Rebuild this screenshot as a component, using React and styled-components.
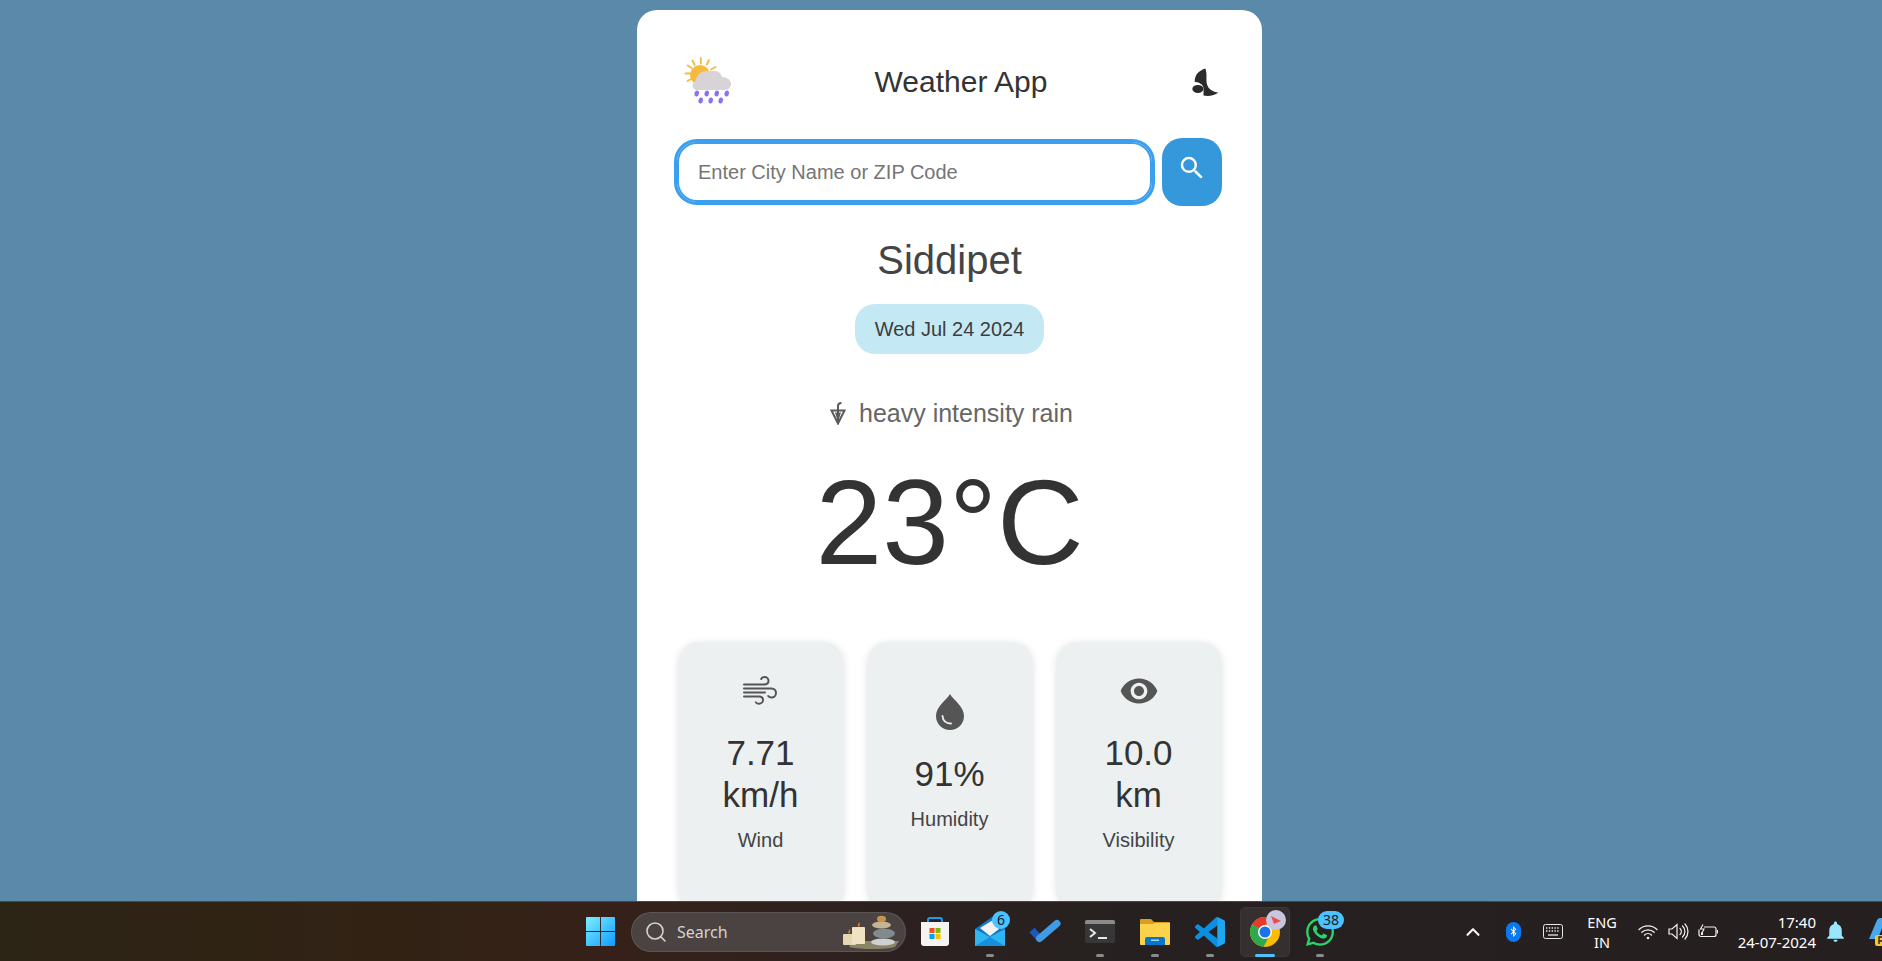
import React from 'react';
import styled, { createGlobalStyle } from 'styled-components';
import { MdSearch, MdVisibility, MdNotifications } from 'react-icons/md';
import { FaWhatsapp, FaBluetoothB } from 'react-icons/fa';
import { Search as SearchGlyph, ChevronUp } from 'lucide-react';

const GlobalStyle = createGlobalStyle`
  html, body, #root {
    margin: 0;
    height: 100%;
    overflow: hidden;
  }
  body {
    font-family: "Liberation Sans", Arial, sans-serif;
    color: #333;
  }
  * {
    box-sizing: border-box;
  }
`;

const Screen = styled.div`
  display: flex;
  flex-direction: column;
  height: 961px;
  overflow: hidden;
`;

const Stage = styled.main`
  flex: 1;
  min-height: 0;
  overflow: hidden;
  display: flex;
  justify-content: center;
  background: #5b89a9;
  padding: 10px 0 0 17px;
`;

const Card = styled.section`
  flex: none;
  width: 625px;
  height: 920px;
  padding: 46px 40px 0;
  background: #fff;
  border-radius: 20px;
  display: flex;
  flex-direction: column;
  align-items: stretch;
`;

const Header = styled.header`
  display: flex;
  align-items: center;
  justify-content: space-between;
  height: 48px;
  padding-left: 7px;
`;

const Title = styled.h1`
  margin: 3px 4px 0 0;
  font-size: 30px;
  font-weight: 400;
  color: #333;
`;

const SearchRow = styled.form`
  display: flex;
  align-items: center;
  gap: 10px;
  margin-top: 34px;
`;

const CityInput = styled.input`
  flex: 1;
  min-width: 0;
  height: 60px;
  padding: 0 19px;
  border: 2px solid #3a9fee;
  border-radius: 20px;
  outline: 3px solid #3a9fee;
  font: 400 20px "Liberation Sans", Arial, sans-serif;
  color: #333;
  background: #fff;

  &::placeholder {
    color: #757575;
    opacity: 1;
  }
`;

const SearchButton = styled.button`
  flex: none;
  width: 60px;
  height: 68px;
  padding: 0 0 8px;
  border: 0;
  border-radius: 20px;
  background: #3498db;
  color: #fff;
  display: flex;
  align-items: center;
  justify-content: center;
`;

const City = styled.h2`
  margin: 31px 0 0;
  text-align: center;
  font-size: 40px;
  line-height: 46px;
  font-weight: 400;
  color: #444;
`;

const DatePill = styled.div`
  align-self: center;
  margin-top: 21px;
  height: 50px;
  padding: 0 20px;
  border-radius: 20px;
  background: #c4e9f4;
  color: #3d3d3d;
  font-size: 20px;
  line-height: 50px;
`;

const Description = styled.div`
  margin-top: 45px;
  display: flex;
  align-items: center;
  justify-content: center;
  gap: 13px;
  height: 28px;
  padding-left: 4px;
  font-size: 25px;
  color: #666;
`;

const Temperature = styled.div`
  margin-top: 23px;
  text-align: center;
  font-size: 120px;
  line-height: 144px;
  color: #333;
`;

const Stats = styled.div`
  display: grid;
  grid-template-columns: repeat(3, 164px);
  justify-content: center;
  gap: 25px;
  margin-top: 48px;
`;

const StatCard = styled.article`
  height: 266px;
  padding: 0 10px 28px;
  border-radius: 20px;
  background: #ecf0f1;
  box-shadow: 0 2px 8px rgba(0, 0, 0, 0.14);
  display: flex;
  flex-direction: column;
  align-items: center;
  justify-content: center;
  text-align: center;
`;

const StatIcon = styled.div`
  height: 40px;
  display: flex;
  align-items: center;
  justify-content: center;
  color: #555;
`;

const StatValue = styled.div`
  margin-top: 21px;
  font-size: 35px;
  line-height: 42px;
  color: #333;
`;

const StatLabel = styled.div`
  margin-top: 13px;
  font-size: 20px;
  line-height: 23px;
  color: #444;
`;

const Taskbar = styled.footer`
  flex: none;
  height: 60px;
  display: flex;
  align-items: center;
  padding-left: 575px;
  border-top: 1px solid #47494a;
  background: linear-gradient(90deg, #2c2414 0%, #332215 25%, #362119 32%, #2e2120 45%, #262120 60%, #25201f 100%);
  overflow: hidden;
  color: #fff;
  font-family: "Noto Sans", "Open Sans", sans-serif;
`;

const TaskSlot = styled.div`
  position: relative;
  flex: none;
  width: 50px;
  height: 50px;
  margin-right: ${({ $gap }) => $gap ?? 5}px;
  border-radius: 5px;
  display: flex;
  align-items: center;
  justify-content: center;
  background: ${({ $active }) => ($active ? 'rgba(255, 255, 255, 0.07)' : 'transparent')};
  box-shadow: ${({ $active }) => ($active ? 'inset 0 0 0 1px rgba(255, 255, 255, 0.04)' : 'none')};
`;

const RunDot = styled.span`
  position: absolute;
  bottom: 0;
  left: 50%;
  transform: translateX(-50%);
  width: ${({ $active }) => ($active ? 20 : 8)}px;
  height: 3px;
  border-radius: 2px;
  background: ${({ $active }) => ($active ? '#4cc2ff' : '#8b8b8b')};
`;

const CountBadge = styled.span`
  position: absolute;
  top: 4px;
  right: ${({ $right }) => $right}px;
  min-width: ${({ $wide }) => ($wide ? 26 : 18)}px;
  height: 18px;
  border-radius: 9px;
  background: #4cc2ff;
  color: #1a1a1a;
  font-size: 14px;
  line-height: 18px;
  text-align: center;
`;

const SearchPill = styled.div`
  flex: none;
  display: flex;
  align-items: center;
  width: 275px;
  height: 40px;
  margin-right: 4px;
  padding: 0 6px 0 12px;
  border-radius: 20px;
  border: 1px solid rgba(255, 255, 255, 0.1);
  background: #4a4341;
  color: #d5d2d0;
  font-size: 16px;
`;

const SearchText = styled.span`
  margin-left: 9px;
  flex: 1;
`;

const Tray = styled.div`
  flex: none;
  display: flex;
  align-items: center;
  margin-left: auto;
  height: 100%;
`;

const TrayItem = styled.div`
  flex: none;
  width: ${({ $width }) => $width}px;
  margin-left: ${({ $offset }) => $offset || 0}px;
  display: flex;
  align-items: center;
  justify-content: ${({ $start }) => ($start ? 'flex-start' : 'center')};
  overflow: hidden;
`;

const BluetoothPill = styled.span`
  width: 15px;
  height: 20px;
  border-radius: 8px;
  background: #0a78f0;
  color: #fff;
  display: flex;
  align-items: center;
  justify-content: center;
`;

const Lang = styled.div`
  margin-right: 2px;
  font-size: 14.5px;
  line-height: 20px;
  text-align: center;
`;

const Clock = styled.div`
  width: 93px;
  text-align: right;
  font-size: 15px;
  line-height: 20px;
  white-space: nowrap;
`;

const ChromeBadge = styled.span`
  position: absolute;
  top: 3px;
  right: 4px;
  width: 20px;
  height: 20px;
  border-radius: 50%;
  background: #c9c5dc;
  display: flex;
  align-items: center;
  justify-content: center;
`;

const MoonSvg = styled.svg`
  margin-top: 3px;
`;

const FixedSvg = styled.svg`
  flex: none;
`;

const WeatherIcon = () => (
  <svg width="50" height="50" viewBox="0 0 50 50">
    <circle cx="16" cy="20" r="10" fill="#f6bb3c" />
    <g stroke="#f6bb3c" strokeWidth="1.8" strokeLinecap="round">
      <path d="M16.8 3v5.5M8.5 5.5l2.2 4.5M25 5l-2.2 4.5M1.5 18.5h5M3.5 26l4.2-2.2M3.5 10.5l4.2 2.5M31.5 12l-4.5 2.5" />
    </g>
    <path d="M13 35c-2.500 0-4.500-2-4.500-4.500 0-2 1-3.500 3-4 .5-5 4-9.500 10-10.500h9c4 0 6.500 2.500 7.500 6 5 0 9 3 9 7 0 3-2.500 6-6 6z" fill="#d7d3d6" />
    <g fill="#8872f6">
      {[[12.7, 38.5], [22.7, 38.5], [32.7, 38.5], [42.7, 38.5], [16.7, 45.5], [26.7, 45.5], [36.7, 45.5]].map(([x, y]) => (
        <ellipse key={`${x}-${y}`} cx={x} cy={y} rx="2.2" ry="3" transform={`rotate(12 ${x} ${y})`} />
      ))}
    </g>
  </svg>
);

const MoonIcon = () => (
  <MoonSvg width="30" height="30" viewBox="1 1 27 27" fill="#2b2b2b">
    <path d="M13 2.300C7.500 4 3 8 3.500 14.500c2.500.2 6 1 7.500 4 .8 2 .3 5 .3 8.200 5 .8 10 0 13.400-2.700-5.500-.5-10.700-3.500-10.700-11 0-4 .3-7.500-1-10.700z" />
    <ellipse cx="6.300" cy="20.700" rx="5" ry="3.600" />
  </MoonSvg>
);

const UmbrellaIcon = () => (
  <svg width="16" height="24" viewBox="0 0 16 24" fill="none" stroke="#5a5a5a" strokeWidth="2">
    <path d="M1.500 9.500L8 22.500l6.500-13z" />
    <path d="M8 22V5c0-2 1-3 3.500-3" />
    <path d="M5 11.500L8 21l3-9.500z" fill="#5a5a5a" stroke="none" />
  </svg>
);

const WindIcon = () => (
  <svg width="35" height="29" viewBox="0 0 35 29" fill="none" stroke="#555" strokeWidth="2" strokeLinecap="round">
    <path d="M1 8.500h20c2.800 0 4.500-1.600 4.500-3.700S23.800 1 21.500 1c-1.600 0-2.800.8-3.300 2" />
    <path d="M1 12.500h27.500c2.700 0 4.500 2 4.500 4.500s-2 4.500-4.500 4.500c-1.400 0-2.600-.5-3.300-1.500" />
    <path d="M1 16.500h21" />
    <path d="M1 20.500h15c2.400 0 4 1.500 4 3.500s-1.700 3.800-4 3.800c-1.400 0-2.500-.6-3.200-1.600" />
  </svg>
);

const DropIcon = () => (
  <svg width="28" height="36" viewBox="0 0 28 36">
    <path d="M14 0C11 5.500 0 12.500 0 22a14 14 0 0 0 28 0C28 12.500 17 5.500 14 0z" fill="#555" />
    <path d="M6.500 22c.3 4.800 3.800 7.800 8.500 7.500" fill="none" stroke="#ecf0f1" strokeWidth="1.800" strokeLinecap="round" />
  </svg>
);

const WindowsIcon = () => (
  <svg width="29" height="29" viewBox="0 0 31 31">
    <defs>
      <linearGradient id="winBlue" x1="0" y1="0" x2="1" y2="1">
        <stop offset="0" stopColor="#7bf0ff" />
        <stop offset="1" stopColor="#0f9bff" />
      </linearGradient>
    </defs>
    <path d="M1 0h14v15H0V1a1 1 0 0 1 1-1zM16 0h14a1 1 0 0 1 1 1v14H16zM0 16h15v15H1a1 1 0 0 1-1-1zM16 16h15v14a1 1 0 0 1-1 1H16z" fill="url(#winBlue)" />
  </svg>
);

const StoreIcon = () => (
  <svg width="30" height="30" viewBox="0 0 30 30">
    <path d="M8 6V3a2 2 0 0 1 2-2h10a2 2 0 0 1 2 2v3" fill="none" stroke="#1d9ae8" strokeWidth="2" />
    <path d="M1 5h28v21a3 3 0 0 1-3 3H4a3 3 0 0 1-3-3z" fill="#f6f4f2" />
    <rect x="9.500" y="11" width="5" height="5" fill="#f25022" />
    <rect x="15.500" y="11" width="5" height="5" fill="#7fba00" />
    <rect x="9.500" y="17" width="5" height="5" fill="#00a4ef" />
    <rect x="15.500" y="17" width="5" height="5" fill="#ffb900" />
  </svg>
);

const MailIcon = () => (
  <svg width="30" height="29" viewBox="0 0 30 29">
    <path d="M0 12L17 0l13 12v17H0z" fill="#1079c9" />
    <path d="M5 11l13-8 6 9-9 7z" fill="#f2f2f2" />
    <path d="M0 12l15 8 15-8v17H0z" fill="#2fb6f0" />
    <path d="M0 29l15-9 15 9z" fill="#1490df" />
  </svg>
);

const TodoIcon = () => (
  <svg width="32" height="26" viewBox="0 0 32 26" fill="none" strokeWidth="7">
    <path d="M3 11l9 10" stroke="#1e58b8" />
    <path d="M10.500 19.500L28 4.500" stroke="#3f9be4" strokeLinecap="round" />
  </svg>
);

const TerminalIcon = () => (
  <svg width="30" height="23" viewBox="0 0 30 23">
    <rect width="30" height="23" rx="2" fill="#373737" />
    <path d="M2 0h26a2 2 0 0 1 2 2v2H0V2a2 2 0 0 1 2-2z" fill="#8c8c8c" />
    <path d="M5 9l5 4-5 4" fill="none" stroke="#e8e8e8" strokeWidth="2" />
    <path d="M13 18h9" stroke="#e8e8e8" strokeWidth="2" />
  </svg>
);

const FolderIcon = () => (
  <svg width="30" height="26" viewBox="0 0 30 26">
    <path d="M1 0h10l3 3h15a1 1 0 0 1 1 1v6H0V1a1 1 0 0 1 1-1z" fill="#d99f1c" />
    <path d="M0 5h13l2-1h15v21a1 1 0 0 1-1 1H1a1 1 0 0 1-1-1z" fill="#fbd24c" />
    <path d="M5 20a2 2 0 0 1 2-2h16a2 2 0 0 1 2 2v6H5z" fill="#0a74c8" />
    <rect x="11" y="20.500" width="8" height="1.500" fill="#9fd5f5" />
  </svg>
);

const CodeIcon = () => (
  <svg width="30" height="30" viewBox="0 0 24 24">
    <path d="M23.150 2.587L18.210.210a1.494 1.494 0 0 0-1.705.290l-9.460 8.630-4.120-3.128a.999.999 0 0 0-1.276.057L.327 7.261A1 1 0 0 0 .326 8.740L3.899 12 .326 15.260a1 1 0 0 0 .001 1.479L1.650 17.940a.999.999 0 0 0 1.276.057l4.120-3.128 9.460 8.630a1.492 1.492 0 0 0 1.704.290l4.942-2.377A1.500 1.500 0 0 0 24 20.060V3.939a1.500 1.500 0 0 0-.850-1.352zm-5.146 14.861L10.826 12l7.178-5.448v10.896z" fill="#0c8fe0" />
    <path d="M18 .4c.1 0 .2 0 .2-.2l4.950 2.390A1.500 1.500 0 0 1 24 3.940v16.120a1.500 1.500 0 0 1-.850 1.350l-4.940 2.380c-.1 0-.2.1-.2 0z" fill="#1fa6f0" />
  </svg>
);

const ChromeIcon = () => (
  <svg width="30" height="30" viewBox="0 0 30 30">
    <circle cx="15" cy="15" r="15" fill="#fbbc04" />
    <path d="M15 15L2 7.500A15 15 0 0 1 28 7.500H15z" fill="#e33b2e" />
    <path d="M15 15L2 7.500A15 15 0 0 0 13.500 29.900L21.500 15z" fill="#2da94f" />
    <circle cx="15" cy="15" r="7" fill="#fff" />
    <circle cx="15" cy="15" r="5.500" fill="#1a73e8" />
  </svg>
);

const StonesArt = () => (
  <FixedSvg width="56" height="34" viewBox="0 0 56 34">
    <path d="M6 32l4-6h46l-4 6q-8 2-22 2t-24-2z" fill="#8a8565" />
    <rect x="0" y="19" width="13" height="11" rx="1" fill="#e6d8b4" />
    <rect x="9" y="12" width="13" height="17" rx="1" fill="#f0e3c4" />
    <path d="M6 19c-1.500-2 0-3 .5-5 .8 2 1.500 3-.5 5zM15.500 12c-1.500-2 0-3 .5-5 .8 2 1.500 3-.5 5z" fill="#e0822c" />
    <ellipse cx="40" cy="27" rx="12" ry="3.600" fill="#cfd0d2" />
    <ellipse cx="41" cy="18.500" rx="11" ry="4.800" fill="#7f8b8d" />
    <ellipse cx="38.500" cy="10" rx="9.500" ry="3.500" fill="#c5b493" />
    <ellipse cx="38.500" cy="4" rx="4.500" ry="3.200" fill="#c69450" />
  </FixedSvg>
);

const KeyboardIcon = () => (
  <svg width="20" height="15" viewBox="0 0 20 15" fill="none" stroke="#e8e8e8" strokeWidth="1">
    <rect x="0.500" y="0.500" width="19" height="14" rx="2" />
    <path d="M3 4h14M3 7h14" strokeDasharray="1.400 1.400" strokeWidth="1.300" />
    <path d="M5 11h10" strokeWidth="1.300" />
  </svg>
);

const WifiIcon = () => (
  <svg width="20" height="16" viewBox="0 0 20 16" fill="none" stroke="#f2f2f2" strokeWidth="1.300" strokeLinecap="round">
    <path d="M1 5.500a13 13 0 0 1 18 0M3.800 8.300a9 9 0 0 1 12.400 0M6.500 11a5 5 0 0 1 7 0" />
    <circle cx="10" cy="14" r="1.300" fill="#f2f2f2" stroke="none" />
  </svg>
);

const VolumeIcon = () => (
  <svg width="21" height="17" viewBox="0 0 21 17" fill="none" stroke="#f2f2f2" strokeWidth="1.200">
    <path d="M1 6h3l5-4.500v14L4 11H1z" />
    <path d="M12 5.500a4 4 0 0 1 0 6M14.500 3a7.500 7.500 0 0 1 0 11M17 1a11 11 0 0 1 0 15" strokeLinecap="round" />
  </svg>
);

const BatteryIcon = () => (
  <svg width="20" height="15" viewBox="0 0 20 15" fill="none" stroke="#f2f2f2" strokeWidth="1.200">
    <path d="M6 3h10a2 2 0 0 1 2 2v5.500a2 2 0 0 1-2 2H3a2 2 0 0 1-2-2V5.500" />
    <path d="M19.500 6v3.500" />
    <path d="M5 .5L2.500 5h3.500L3.500 10" strokeWidth="1.100" />
    <rect x="3" y="8.500" width="2" height="2.500" fill="#f2f2f2" stroke="none" />
  </svg>
);

const CopilotIcon = () => (
  <FixedSvg width="30" height="30" viewBox="0 0 30 30">
    <path d="M3 22L11 3q1-2 3-2h8q-3 2-4 5l-5 13q-1 3-4 3z" fill="#4aa7ee" />
    <path d="M21 2h5q3 0 2 3l-5 13q-1 3-4 3h-6q3-1 4-4z" fill="#5cc98a" />
    <rect x="9" y="18" width="13" height="11" rx="2" fill="#fdc32d" />
    <path d="M13 27v-7h2.500a2 2 0 0 1 0 4H13" fill="none" stroke="#1f1f1f" strokeWidth="1.300" />
  </FixedSvg>
);

const stats = [
  { key: 'wind', icon: <WindIcon />, value: <>7.71<br />km/h</>, label: 'Wind' },
  { key: 'humidity', icon: <DropIcon />, value: '91%', label: 'Humidity' },
  { key: 'visibility', icon: <MdVisibility size={40} />, value: <>10.0<br />km</>, label: 'Visibility' },
];

export default function App() {
  return (
    <Screen>
      <GlobalStyle />
      <Stage>
        <Card>
          <Header>
            <WeatherIcon />
            <Title>Weather App</Title>
            <MoonIcon />
          </Header>
          <SearchRow onSubmit={(e) => e.preventDefault()}>
            <CityInput placeholder="Enter City Name or ZIP Code" />
            <SearchButton aria-label="Search">
              <MdSearch size={30} />
            </SearchButton>
          </SearchRow>
          <City>Siddipet</City>
          <DatePill>Wed Jul 24 2024</DatePill>
          <Description>
            <UmbrellaIcon />
            heavy intensity rain
          </Description>
          <Temperature>23°C</Temperature>
          <Stats>
            {stats.map((stat) => (
              <StatCard key={stat.key}>
                <StatIcon>{stat.icon}</StatIcon>
                <StatValue>{stat.value}</StatValue>
                <StatLabel>{stat.label}</StatLabel>
              </StatCard>
            ))}
          </Stats>
        </Card>
      </Stage>
      <Taskbar>
        <TaskSlot $gap={6}><WindowsIcon /></TaskSlot>
        <SearchPill>
          <SearchGlyph size={24} strokeWidth={1.6} />
          <SearchText>Search</SearchText>
          <StonesArt />
        </SearchPill>
        <TaskSlot><StoreIcon /></TaskSlot>
        <TaskSlot>
          <MailIcon />
          <CountBadge $right={5}>6</CountBadge>
          <RunDot />
        </TaskSlot>
        <TaskSlot><TodoIcon /></TaskSlot>
        <TaskSlot><TerminalIcon /><RunDot /></TaskSlot>
        <TaskSlot><FolderIcon /><RunDot /></TaskSlot>
        <TaskSlot><CodeIcon /><RunDot /></TaskSlot>
        <TaskSlot $active>
          <ChromeIcon />
          <ChromeBadge>
            <svg width="12" height="10" viewBox="0 0 12 10">
              <path d="M1 1l10 5-7 3z" fill="#ea4d4d" />
            </svg>
          </ChromeBadge>
          <RunDot $active />
        </TaskSlot>
        <TaskSlot>
          <FaWhatsapp size={32} color="#2bd46b" />
          <CountBadge $right={1} $wide>38</CountBadge>
          <RunDot />
        </TaskSlot>
        <Tray>
          <TrayItem $width={40}><ChevronUp size={22} color="#f2f2f2" strokeWidth={2.4} /></TrayItem>
          <TrayItem $width={40}><BluetoothPill><FaBluetoothB size={11} /></BluetoothPill></TrayItem>
          <TrayItem $width={40}><KeyboardIcon /></TrayItem>
          <TrayItem $width={60}><Lang>ENG<br />IN</Lang></TrayItem>
          <TrayItem $width={30}><WifiIcon /></TrayItem>
          <TrayItem $width={30}><VolumeIcon /></TrayItem>
          <TrayItem $width={30}><BatteryIcon /></TrayItem>
          <Clock>17:40<br />24-07-2024</Clock>
          <TrayItem $width={38}><MdNotifications size={25} color="#9be6ff" /></TrayItem>
          <TrayItem $width={16} $offset={12} $start><CopilotIcon /></TrayItem>
        </Tray>
      </Taskbar>
    </Screen>
  );
}
